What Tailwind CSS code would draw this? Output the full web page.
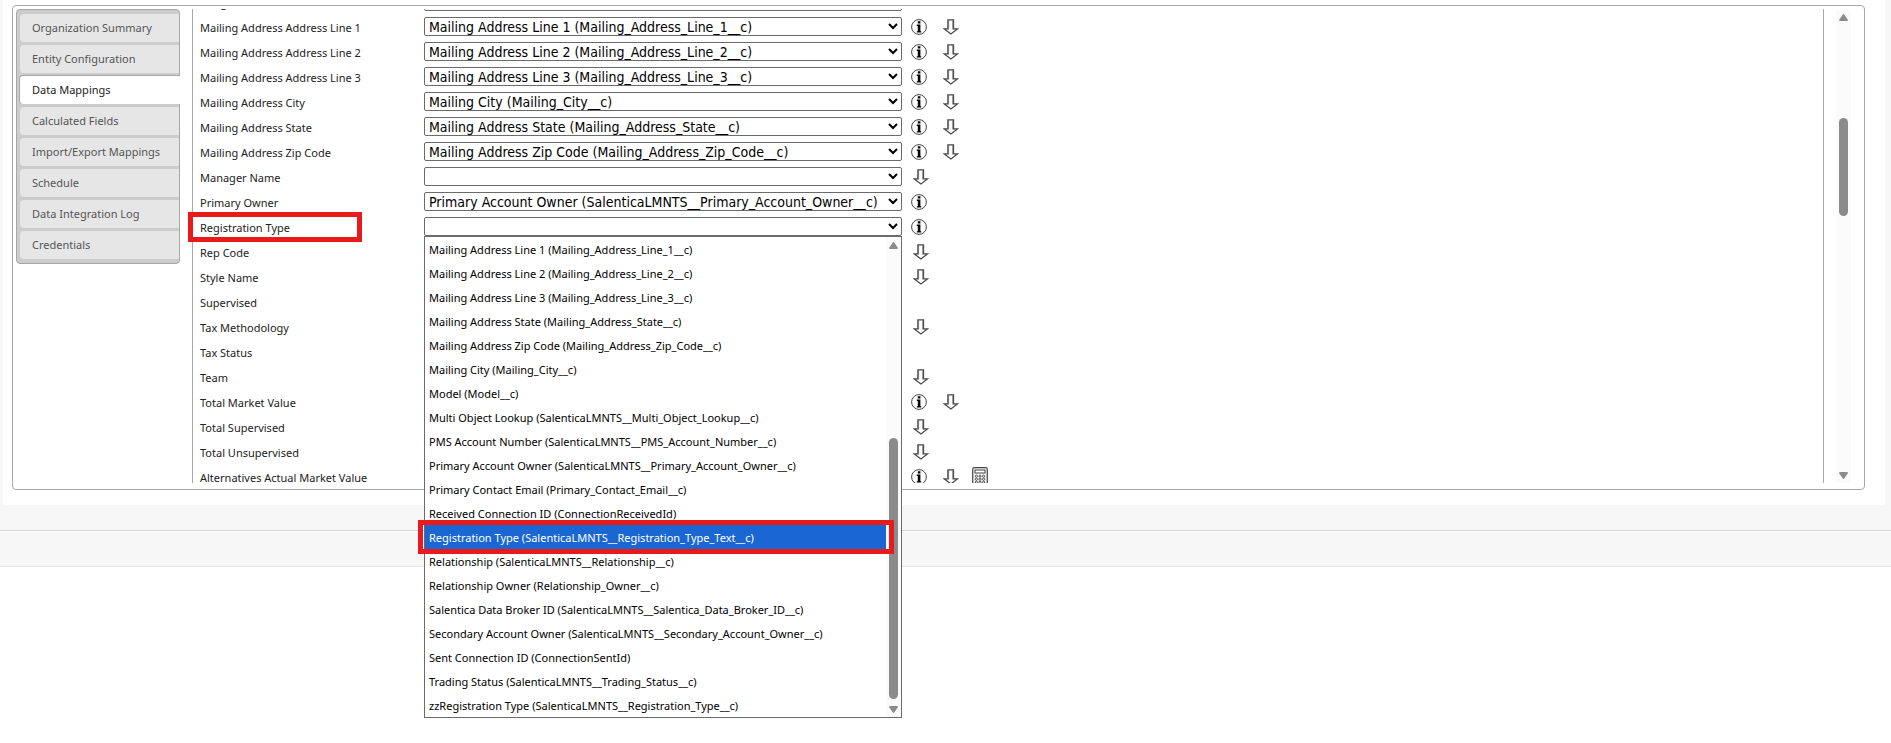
<!DOCTYPE html>
<html lang="en">
<head>
<meta charset="utf-8">
<title>Data Mappings</title>
<script src="https://cdn.jsdelivr.net/npm/@tailwindcss/browser@4"></script>
</head>
<body class="min-h-screen bg-white font-['Noto_Sans',sans-serif] text-[11px] leading-4 text-[#222]">
<svg class="hidden" aria-hidden="true">
  <symbol id="i-info" viewBox="0 0 16 16">
    <circle cx="8" cy="8" r="7.4" fill="#fff" stroke="#444" stroke-width="1"/>
    <path d="M6.8 2.2h2.6v2.3H6.8zM5.8 5.6h3.6v6.6h.8v1.3H5.8v-1.3h1V6.9h-1z" fill="#000"/>
  </symbol>
  <symbol id="i-down" viewBox="0 0 16 16">
    <path d="M4.9 .8h5.6v9.1h4L7.9 14.9 1.3 9.9h3.6z" fill="#fff" stroke="#484848" stroke-width="1.3"/>
    <path d="M5.6 1.4v9M9.8 1.4v9" stroke="#666" stroke-width=".8"/>
  </symbol>
  <symbol id="i-calc" viewBox="0 0 16 20">
    <rect x=".7" y=".7" width="14.6" height="18.6" rx="1.8" fill="#f4f4f4" stroke="#444" stroke-width="1.2"/>
    <rect x="3" y="3" width="10" height="3" fill="#fff" stroke="#444"/>
    <g fill="#fff" stroke="#444" stroke-width=".9">
      <circle cx="4.4" cy="9.2" r="1.1"/><circle cx="8" cy="9.2" r="1.1"/><circle cx="11.6" cy="9.2" r="1.1"/>
      <circle cx="4.4" cy="12.2" r="1.1"/><circle cx="8" cy="12.2" r="1.1"/><circle cx="11.6" cy="12.2" r="1.1"/>
      <circle cx="4.4" cy="15.2" r="1.1"/><circle cx="8" cy="15.2" r="1.1"/><circle cx="11.6" cy="15.2" r="1.1"/>
    </g>
  </symbol>
</svg>

<div class="bg-[#f7f7f7] pl-[3px] pr-[6px]">
  <main class="bg-white pt-[5px] pl-[9px] pr-5 pb-[15px]">
    <div class="relative flex rounded border border-[#a8a8a8] pt-[3px] pl-[3px] pr-[13px] pb-[6px]">
      <nav class="flex w-[164px] shrink-0 flex-col gap-[3px] self-start rounded border border-[#a8a8a8] bg-[#ccc] py-1 pl-[3px] text-[#555]" aria-label="Settings">
        <a href="#" class="flex h-7 items-center rounded-l bg-[#e6e6e6] pl-3">Organization Summary</a>
        <a href="#" class="flex h-7 items-center rounded-l bg-[#e6e6e6] pl-3">Entity Configuration</a>
        <a href="#" class="-mt-px -mr-px -ml-px flex h-[29px] items-center rounded-l border-t border-l border-[#a8a8a8] bg-white pl-3 text-[#222]" aria-current="page">Data Mappings</a>
        <a href="#" class="flex h-7 items-center rounded-l bg-[#e6e6e6] pl-3">Calculated Fields</a>
        <a href="#" class="flex h-7 items-center rounded-l bg-[#e6e6e6] pl-3">Import/Export Mappings</a>
        <a href="#" class="flex h-7 items-center rounded-l bg-[#e6e6e6] pl-3">Schedule</a>
        <a href="#" class="flex h-7 items-center rounded-l bg-[#e6e6e6] pl-3">Data Integration Log</a>
        <a href="#" class="flex h-7 items-center rounded-l bg-[#e6e6e6] pl-3">Credentials</a>
      </nav>

      <section class="ml-3 h-[474px] grow overflow-hidden border-x border-[#a8a8a8] pl-[7px]" aria-label="Field mappings">
        <div id="rows" class="-mt-5"></div>
      </section>

      <div class="ml-3 flex w-[15px] shrink-0 flex-col items-center bg-[#fbfbfb] pt-[5px] pb-1" aria-hidden="true">
        <svg class="h-[7px] w-[9px]" viewBox="0 0 9 7"><path d="M3.8.5Q4.5-.3 5.2.5L8.7 5.6Q9.2 7 8 7H1Q-.2 7 .3 5.6z" fill="#8b8b8b"/></svg>
        <div class="mt-[97px] h-[98px] w-[9px] rounded-full bg-[#8b8b8b]"></div>
        <svg class="mt-auto h-[7px] w-[9px]" viewBox="0 0 9 7"><path d="M3.8 6.5Q4.5 7.3 5.2 6.5L8.7 1.4Q9.2 0 8 0H1Q-.2 0 .3 1.4z" fill="#8b8b8b"/></svg>
      </div>

      <!-- Highlight around the field being mapped -->
      <div class="pointer-events-none absolute top-[206px] left-[175px] h-[30px] w-[174px] border-5 border-[#e81a1c]"></div>

      <!-- Open drop-down list -->
      <div class="absolute top-[230px] left-[411px] flex w-[478px] border border-[#6b6b6b] bg-white text-black">
        <ul id="options" class="grow" role="listbox" aria-label="Registration Type"></ul>
        <div class="flex w-[15px] shrink-0 flex-col items-center bg-[#fbfbfb] pt-[5px] pb-1" aria-hidden="true">
          <svg class="h-[7px] w-[9px]" viewBox="0 0 9 7"><path d="M3.8.5Q4.5-.3 5.2.5L8.7 5.6Q9.2 7 8 7H1Q-.2 7 .3 5.6z" fill="#8b8b8b"/></svg>
          <div class="mt-auto h-[261px] w-[9px] rounded-full bg-[#8b8b8b]"></div>
          <svg class="mt-[7px] h-[7px] w-[9px]" viewBox="0 0 9 7"><path d="M3.8 6.5Q4.5 7.3 5.2 6.5L8.7 1.4Q9.2 0 8 0H1Q-.2 0 .3 1.4z" fill="#8b8b8b"/></svg>
        </div>
        <div class="pointer-events-none absolute top-[283px] -left-[7px] h-[34px] w-[476px] border-5 border-[#e81a1c]"></div>
      </div>
    </div>
  </main>
</div>
<footer class="bg-[#f7f7f7] pt-[25px]">
  <div class="border-y border-t-[#d6d6d6] border-b-[#e5e5e5]">
    <div class="h-[35px] border-t border-white"></div>
  </div>
</footer>

<script>
const rows = [
  ['Margin', '', ''],
  ['Mailing Address Address Line 1', 'Mailing Address Line 1 (Mailing_Address_Line_1__c)', 'id'],
  ['Mailing Address Address Line 2', 'Mailing Address Line 2 (Mailing_Address_Line_2__c)', 'id'],
  ['Mailing Address Address Line 3', 'Mailing Address Line 3 (Mailing_Address_Line_3__c)', 'id'],
  ['Mailing Address City', 'Mailing City (Mailing_City__c)', 'id'],
  ['Mailing Address State', 'Mailing Address State (Mailing_Address_State__c)', 'id'],
  ['Mailing Address Zip Code', 'Mailing Address Zip Code (Mailing_Address_Zip_Code__c)', 'id'],
  ['Manager Name', '', 'd'],
  ['Primary Owner', 'Primary Account Owner (SalenticaLMNTS__Primary_Account_Owner__c)', 'i'],
  ['Registration Type', '', 'i'],
  ['Rep Code', '', 'd'],
  ['Style Name', '', 'd'],
  ['Supervised', '', ''],
  ['Tax Methodology', '', 'd'],
  ['Tax Status', '', ''],
  ['Team', '', 'd'],
  ['Total Market Value', '', 'id'],
  ['Total Supervised', '', 'd'],
  ['Total Unsupervised', '', 'd'],
  ['Alternatives Actual Market Value', '', 'idc'],
];
const info = '<button type="button" class="ml-[9px]" aria-label="Information"><svg class="size-4"><use href="#i-info"/></svg></button>';
const downAfterInfo = '<button type="button" class="ml-4" aria-label="Pull value"><svg class="size-4"><use href="#i-down"/></svg></button>';
const downOnly = '<button type="button" class="ml-[11px]" aria-label="Pull value"><svg class="size-4"><use href="#i-down"/></svg></button>';
const calc = '<button type="button" class="ml-[13px]" aria-label="Calculate"><svg class="h-5 w-4"><use href="#i-calc"/></svg></button>';
const icons = { '': '', i: info, d: downOnly, id: info + downAfterInfo, idc: info + downAfterInfo + calc };
document.getElementById('rows').innerHTML = rows.map(([label, value, kind], n) => `
  <div class="flex h-[25px] items-center">
    <label for="f${n}" class="w-[224px] shrink-0 pt-0.5">${label}</label>
    <select id="f${n}" class="h-[19px] w-[478px] shrink-0 rounded-xs border border-[#6b6b6b] bg-white font-['DejaVu_Sans_Condensed',sans-serif] text-sm leading-4 text-black"><option>${value}</option></select>
    ${icons[kind]}
  </div>`).join('');

const options = [
  'Mailing Address Line 1 (Mailing_Address_Line_1__c)',
  'Mailing Address Line 2 (Mailing_Address_Line_2__c)',
  'Mailing Address Line 3 (Mailing_Address_Line_3__c)',
  'Mailing Address State (Mailing_Address_State__c)',
  'Mailing Address Zip Code (Mailing_Address_Zip_Code__c)',
  'Mailing City (Mailing_City__c)',
  'Model (Model__c)',
  'Multi Object Lookup (SalenticaLMNTS__Multi_Object_Lookup__c)',
  'PMS Account Number (SalenticaLMNTS__PMS_Account_Number__c)',
  'Primary Account Owner (SalenticaLMNTS__Primary_Account_Owner__c)',
  'Primary Contact Email (Primary_Contact_Email__c)',
  'Received Connection ID (ConnectionReceivedId)',
  'Registration Type (SalenticaLMNTS__Registration_Type_Text__c)',
  'Relationship (SalenticaLMNTS__Relationship__c)',
  'Relationship Owner (Relationship_Owner__c)',
  'Salentica Data Broker ID (SalenticaLMNTS__Salentica_Data_Broker_ID__c)',
  'Secondary Account Owner (SalenticaLMNTS__Secondary_Account_Owner__c)',
  'Sent Connection ID (ConnectionSentId)',
  'Trading Status (SalenticaLMNTS__Trading_Status__c)',
  'zzRegistration Type (SalenticaLMNTS__Registration_Type__c)',
];
document.getElementById('options').innerHTML = options.map((text, n) => n === 12
  ? `<li role="option" aria-selected="true" class="flex h-6 items-center bg-[#1a67d4] pt-0.5 pl-1 text-white">${text}</li>`
  : `<li role="option" aria-selected="false" class="flex h-6 items-center pt-0.5 pl-1">${text}</li>`).join('');
</script>
</body>
</html>
